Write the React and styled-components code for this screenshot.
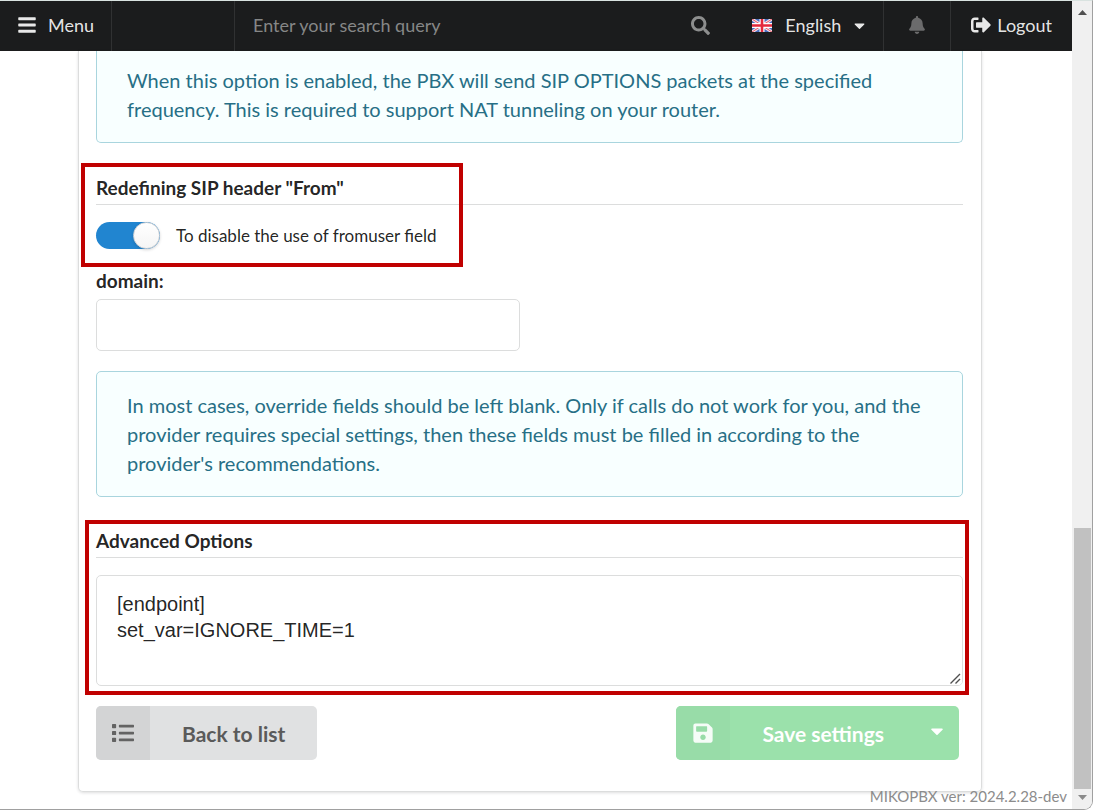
import React from "react";
import styled, { createGlobalStyle } from "styled-components";
import {
  FaBars,
  FaSearch,
  FaBell,
  FaSignOutAlt,
  FaCaretDown,
  FaList,
  FaSave,
} from "react-icons/fa";

const GlobalStyle = createGlobalStyle`
  *, *::before, *::after { box-sizing: border-box; }
  body {
    margin: 0;
    background: #fff;
    color: rgba(0, 0, 0, 0.87);
    font-family: Lato, "Liberation Sans", sans-serif;
    font-size: 18px;
    line-height: 24px;
  }
  button, input, select { font-family: inherit; }
`;

const Window = styled.div`
  display: flex;
  min-height: 100vh;
  border: 1px solid #a0a0a0;
  border-top-color: #d9e3e0;
  border-left: 0;
  border-bottom-right-radius: 9px;
  overflow: hidden;
`;

const Page = styled.div`
  position: relative;
  flex: 1;
  min-width: 0;
`;

const TopBar = styled.header`
  display: flex;
  height: 50px;
  background: #1b1c1d;
  color: rgba(255, 255, 255, 0.9);
`;

const BarButton = styled.button`
  display: flex;
  align-items: center;
  gap: ${(p) => p.$gap || 0}px;
  padding: 0 ${(p) => p.$pad}px 2px;
  border: 0;
  border-left: ${(p) => (p.$divided ? "1px solid #303132" : "0")};
  background: none;
  color: ${(p) => (p.$dim ? "#6b6b6c" : "inherit")};
  font-size: 18px;
`;

const Brand = styled.div`
  width: 124px;
  border: 1px solid #303132;
  border-width: 0 1px;
`;

const Search = styled.label`
  display: flex;
  flex: 1;
  align-items: center;
  min-width: 0;
  padding: 0 22px 2px 18px;
  color: #8d8e8e;
`;

const SearchInput = styled.input`
  flex: 1;
  min-width: 0;
  padding: 0;
  border: 0;
  background: none;
  color: inherit;
  font-size: 18px;
  outline: none;
  &::placeholder { color: #868787; opacity: 1; }
`;

const Language = styled.label`
  display: flex;
  align-items: center;
  padding: 0 15px 2px 20px;
`;

const LanguageSelect = styled.select`
  margin-left: 13px;
  padding: 0;
  width: 66px;
  border: 0;
  appearance: none;
  background: none;
  color: inherit;
  font-size: 18px;
`;

const Card = styled.main`
  margin: 0 90px 0 78px;
  padding: 0 18px 31px 17px;
  border: 1px solid #dcdddd;
  border-top: 0;
  border-radius: 0 0 5px 5px;
  box-shadow: 0 1px 3px rgba(34, 36, 38, 0.15);
`;

const Info = styled.p`
  margin: 0;
  padding: ${(p) => (p.$continued ? 15 : 19)}px 30px 18px;
  border: 1px solid #a9d5de;
  border-top-width: ${(p) => (p.$continued ? 0 : 1)}px;
  border-radius: ${(p) => (p.$continued ? "0 0 5px 5px" : "5px")};
  background: #f8ffff;
  color: #276f86;
  font-size: 20px;
  line-height: 29px;
`;

const Section = styled.section`
  position: relative;
  margin-top: ${(p) => p.$space}px;
`;

const Heading = styled.h2`
  margin: 0 0 17px;
  padding-bottom: 4px;
  border-bottom: 1px solid #dcdddd;
  font-size: 19px;
  line-height: 24px;
`;

const Highlight = styled.div`
  position: absolute;
  inset: ${(p) => p.$inset};
  width: ${(p) => p.$width || "auto"};
  border: 4px solid #c00000;
  pointer-events: none;
`;

const ToggleRow = styled.label`
  display: flex;
  align-items: center;
  gap: 16px;
  height: 27px;
  font-size: 17px;
`;

const Toggle = styled.input`
  appearance: none;
  position: relative;
  width: 64px;
  height: 27px;
  margin: 0;
  border-radius: 14px;
  background: #ddd;
  &:checked { background: #2185d0; }
  &::before {
    content: "";
    position: absolute;
    top: 0;
    left: 0;
    width: 27px;
    height: 27px;
    border: 1px solid #d4d4d5;
    border-radius: 50%;
    background: linear-gradient(#fff, #f5f5f5);
    box-shadow: 0 1px 3px rgba(34, 36, 38, 0.2);
  }
  &:checked::before { left: auto; right: 0; }
`;

const Field = styled.div`
  margin: 20px 0;
`;

const FieldLabel = styled.label`
  display: block;
  margin-bottom: 6px;
  font-size: 19px;
  font-weight: 700;
`;

const TextInput = styled.input`
  display: block;
  width: calc(50% - 10px);
  height: 52px;
  padding: 0 20px;
  border: 1px solid #dcdddd;
  border-radius: 5px;
  font-size: 18px;
`;

const TextAreaBox = styled.div`
  position: relative;
`;

const ResizeGrip = styled.svg`
  position: absolute;
  right: 1px;
  bottom: 1px;
  border-radius: 0 0 4px 0;
  background: #fff;
  pointer-events: none;
`;

const TextArea = styled.textarea`
  display: block;
  width: 100%;
  height: 111px;
  padding: 15px 20px;
  border: 1px solid #dcdddd;
  border-radius: 5px;
  color: rgba(0, 0, 0, 0.87);
  font-family: "Liberation Sans", sans-serif;
  font-size: 20px;
  line-height: 26px;
  resize: vertical;
`;

const Actions = styled.div`
  display: flex;
  justify-content: space-between;
  margin: 20px 4px 0 0;
`;

const ButtonGroup = styled.div`
  display: flex;
`;

const ActionButton = styled.button`
  display: flex;
  align-items: center;
  height: 54px;
  padding: 0 32px 0 0;
  border: 0;
  border-radius: ${(p) => (p.$positive ? "5px 0 0 5px" : "5px")};
  background: ${(p) => (p.$positive ? "#9be1ab" : "#e0e1e2")};
  color: ${(p) => (p.$positive ? "#fff" : "#5a5a5a")};
  font-size: 21px;
  font-weight: 700;
`;

const ButtonIcon = styled.span`
  display: grid;
  place-items: center;
  width: 54px;
  height: 54px;
  margin-right: 32px;
  border-radius: 5px 0 0 5px;
  background: ${(p) => (p.$positive ? "#98dca8" : "#d3d4d5")};
  color: ${(p) => (p.$positive ? "#f5fcf7" : "#636363")};
`;

const MenuButton = styled.button`
  display: grid;
  place-items: center;
  width: 43px;
  padding: 0 2px 4px 0;
  border: 0;
  border-radius: 0 5px 5px 0;
  background: #9be1ab;
  color: #fff;
`;

const Version = styled.footer`
  position: absolute;
  right: 5px;
  bottom: 1px;
  color: #8c8c8c;
  font-size: 15px;
`;

const ScrollBar = styled.div`
  display: flex;
  flex-direction: column;
  width: 20px;
  padding: 0 1px 0 2px;
  background: #f0f0f0;
`;

const ScrollArrow = styled.svg`
  width: 17px;
  height: 20px;
  fill: ${(p) => p.$color};
`;

const ScrollTrack = styled.div`
  flex: 506;
`;

const ScrollThumb = styled.div`
  flex: 261;
  background: #c1c1c1;
`;

function UkFlag() {
  return (
    <svg width="20" height="13" viewBox="0 0 20 13" aria-hidden="true">
      <rect width="20" height="13" fill="#4a6fc0" />
      <path d="M0 0L20 13M20 0L0 13" stroke="#f6dfe4" strokeWidth="3" />
      <path d="M0 0L20 13M20 0L0 13" stroke="#e5566a" strokeWidth="1" />
      <path d="M10 0V13M0 6.5H20" stroke="#fff" strokeWidth="5" />
      <path d="M10 0V13M0 6.5H20" stroke="#e4283c" strokeWidth="2.6" />
    </svg>
  );
}

export default function App() {
  return (
    <>
      <GlobalStyle />
      <Window>
        <Page>
          <TopBar>
            <BarButton type="button" $pad={17} $gap={11}>
              <FaBars size={20} />
              Menu
            </BarButton>
            <Brand />
            <Search>
              <SearchInput type="text" aria-label="Search" placeholder="Enter your search query" />
              <FaSearch size={19} />
            </Search>
            <Language>
              <UkFlag />
              <LanguageSelect aria-label="Language" defaultValue="en">
                <option value="en">English</option>
              </LanguageSelect>
              <FaCaretDown size={17} />
            </Language>
            <BarButton type="button" aria-label="Notifications" $pad={24} $divided $dim>
              <FaBell size={18} />
            </BarButton>
            <BarButton type="button" $pad={20} $divided $gap={6}>
              <FaSignOutAlt size={20} />
              Logout
            </BarButton>
          </TopBar>

          <Card>
            <Info $continued>
              When this option is enabled, the PBX will send SIP OPTIONS packets at the specified
              frequency. This is required to support NAT tunneling on your router.
            </Info>

            <Section $space={33}>
              <Heading>Redefining SIP header "From"</Heading>
              <ToggleRow>
                <Toggle type="checkbox" role="switch" defaultChecked />
                To disable the use of fromuser field
              </ToggleRow>
              <Highlight $inset="-13px auto -18px -15px" $width="382px" />
            </Section>

            <Field>
              <FieldLabel htmlFor="domain">domain:</FieldLabel>
              <TextInput id="domain" type="text" />
            </Field>

            <Info>
              In most cases, override fields should be left blank. Only if calls do not work for
              you, and the provider requires special settings, then these fields must be filled in
              according to the provider's recommendations.
            </Info>

            <Section $space={32}>
              <Heading id="advanced">Advanced Options</Heading>
              <TextAreaBox>
                <TextArea
                  aria-labelledby="advanced"
                  defaultValue={"[endpoint]\nset_var=IGNORE_TIME=1"}
                />
                <ResizeGrip width="15" height="15" viewBox="0 0 15 15" aria-hidden="true">
                  <path
                    d="M3.500 13.500L13 4M8.500 13.500L13 9"
                    stroke="#505050"
                    strokeWidth="1.400"
                  />
                </ResizeGrip>
              </TextAreaBox>
              <Highlight $inset="-9px -6px -9px -11px" />
            </Section>

            <Actions>
              <ActionButton type="button">
                <ButtonIcon>
                  <FaList size={22} />
                </ButtonIcon>
                Back to list
              </ActionButton>
              <ButtonGroup>
                <ActionButton type="button" $positive>
                  <ButtonIcon $positive>
                    <FaSave size={22} />
                  </ButtonIcon>
                  Save settings
                </ActionButton>
                <MenuButton type="button" aria-label="More save options">
                  <FaCaretDown size={20} />
                </MenuButton>
              </ButtonGroup>
            </Actions>
          </Card>
          <Version>MIKOPBX ver: 2024.2.28-dev</Version>
        </Page>

        <ScrollBar aria-hidden="true">
          <ScrollArrow viewBox="0 0 17 20" $color="#505050">
            <path d="M4 14L8.500 9L13 14Z" />
          </ScrollArrow>
          <ScrollTrack />
          <ScrollThumb />
          <ScrollArrow viewBox="0 0 17 20" $color="#8a8a8a">
            <path d="M4 6L8.500 11L13 6Z" />
          </ScrollArrow>
        </ScrollBar>
      </Window>
    </>
  );
}
